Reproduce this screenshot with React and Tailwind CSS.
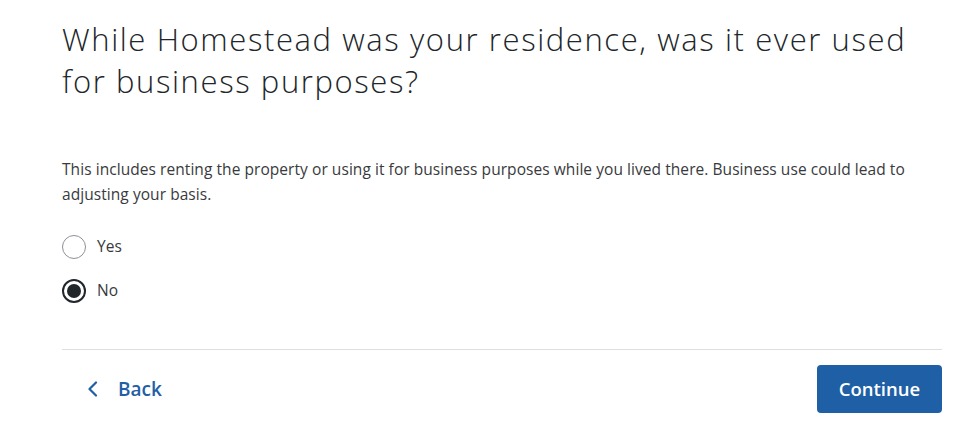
import { useState } from 'react';

function Radio({ label, checked, onSelect }) {
  return (
    <label className="flex cursor-pointer items-center gap-[11px]" onClick={onSelect}>
      <span
        className={
          checked
            ? 'flex h-6 w-6 items-center justify-center rounded-full border-2 border-[#21262a] bg-white'
            : 'flex h-6 w-6 items-center justify-center rounded-full border border-[#8d9096] bg-white'
        }
      >
        {checked && <span className="h-[14px] w-[14px] rounded-full bg-[#21262a]" />}
      </span>
      <span className="text-[15.5px] tracking-[0.1px] text-[#393a3d]">{label}</span>
    </label>
  );
}

export default function App() {
  const [answer, setAnswer] = useState('no');

  return (
    <div className="min-h-screen bg-white font-['Open_Sans','Noto_Sans',sans-serif]">
      <div className="ml-[62px] w-[880px] pt-[18px]">
        <h1 className="text-[31px] font-light leading-[42px] tracking-[1.6px] text-[#21262a]">
          While Homestead was your residence, was it ever used for business purposes?
        </h1>

        <p className="mt-[55px] text-[15.5px] leading-[25px] tracking-[0.06px] text-[#393a3d]">
          This includes renting the property or using it for business purposes while you lived there. Business use could lead to
          adjusting your basis.
        </p>

        <div className="mt-[28px] flex flex-col gap-5">
          <Radio label="Yes" checked={answer === 'yes'} onSelect={() => setAnswer('yes')} />
          <Radio label="No" checked={answer === 'no'} onSelect={() => setAnswer('no')} />
        </div>

        <div className="mt-[46px] border-t border-[#dcdee0]" />

        <div className="mt-[15px] flex items-center justify-between">
          <button className="flex items-center gap-[20px] pl-[25px] text-[19px] font-semibold text-[#1f5fa5]">
            <svg width="11" height="16" viewBox="0 0 11 16" fill="none">
              <path d="M9 1.5L2.5 8 9 14.5" stroke="currentColor" strokeWidth="2.2" strokeLinecap="round" strokeLinejoin="round" />
            </svg>
            Back
          </button>
          <button className="h-[48px] w-[125px] rounded-[4px] bg-[#1f5fa5] text-[18.5px] font-semibold text-white">
            Continue
          </button>
        </div>
      </div>
    </div>
  );
}
